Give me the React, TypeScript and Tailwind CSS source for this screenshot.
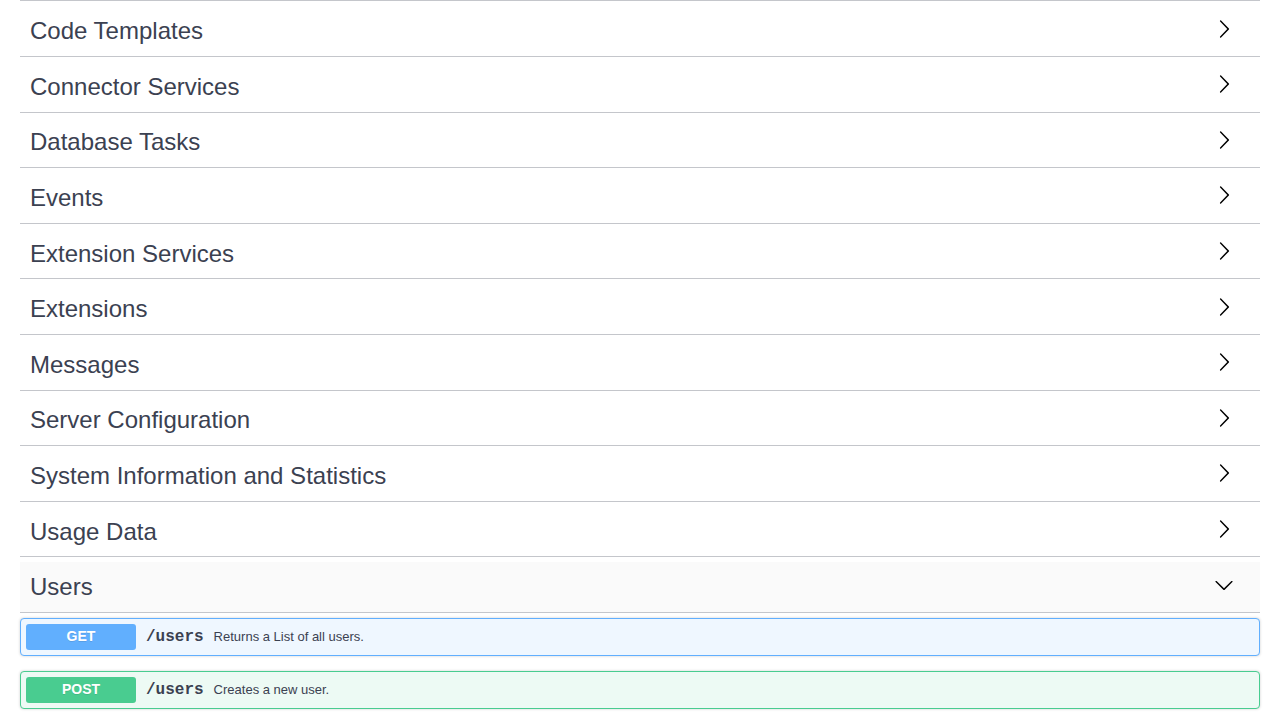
import React from "react";

const tags = [
  "Code Templates",
  "Connector Services",
  "Database Tasks",
  "Events",
  "Extension Services",
  "Extensions",
  "Messages",
  "Server Configuration",
  "System Information and Statistics",
  "Usage Data",
];

function ArrowRight() {
  return (
    <svg width="20" height="20" viewBox="0 0 20 20" className="mr-[6px] mb-[5px] shrink-0">
      <path
        fill="#000"
        d="M13.25 10L6.109 2.58a.697.697 0 0 1 0-.979.68.68 0 0 1 .969 0l7.83 7.908a.697.697 0 0 1 0 .979l-7.83 7.908a.68.68 0 0 1-.969 0 .697.697 0 0 1 0-.979L13.25 10z"
      />
    </svg>
  );
}

function ArrowDown() {
  return (
    <svg width="20" height="20" viewBox="0 0 20 20" className="mr-[6px] mb-[5px] shrink-0">
      <path
        fill="#000"
        d="M17.418 6.109c.272-.268.709-.268.979 0s.271.701 0 .969l-7.908 7.83c-.27.268-.707.268-.979 0l-7.908-7.83c-.27-.268-.27-.701 0-.969.271-.268.709-.268.979 0L10 13.25l7.418-7.141z"
      />
    </svg>
  );
}

function Tag({ name, open }: { name: string; open?: boolean }) {
  return (
    <div
      className={
        "flex items-center justify-between h-[50.6px] mb-[5px] border-b border-[#c4c6cb] pl-[10px] pr-[20px] " +
        (open ? "bg-[#fafafa]" : "")
      }
    >
      <span className="text-[24px] leading-[28px] text-[#3b4151]">{name}</span>
      {open ? <ArrowDown /> : <ArrowRight />}
    </div>
  );
}

function Op({
  method,
  desc,
  border,
  bg,
  badge,
}: {
  method: string;
  desc: string;
  border: string;
  bg: string;
  badge: string;
}) {
  return (
    <div
      className={
        "flex items-center h-[38px] mb-[15px] rounded-[4px] border px-[5px] shadow-[0_0_3px_rgba(0,0,0,0.19)] " +
        border +
        " " +
        bg
      }
    >
      <div
        className={
          "w-[110px] h-[26px] rounded-[3px] flex items-center justify-center text-white font-bold text-[14px] [text-shadow:0_1px_0_rgba(0,0,0,0.1)] " +
          badge
        }
      >
        {method}
      </div>
      <span className="px-[10px] pt-[1px] font-['Liberation_Mono','Courier_New',monospace] font-bold text-[16px] text-[#3b4151]">
        /users
      </span>
      <span className="text-[13px] text-[#3b4151]">{desc}</span>
    </div>
  );
}

export default function App() {
  return (
    <div className="w-[1280px] h-[720px] overflow-hidden bg-white font-['Liberation_Sans',Arial,sans-serif]">
      <div className="px-5">
        <div className="h-[1.4px] border-b border-[#c4c6cb] mb-[5px]" />
        {tags.map((t) => (
          <Tag key={t} name={t} />
        ))}
        <Tag name="Users" open />
        <Op
          method="GET"
          desc="Returns a List of all users."
          border="border-[#61affe]"
          bg="bg-[#eff7ff]"
          badge="bg-[#61affe]"
        />
        <Op
          method="POST"
          desc="Creates a new user."
          border="border-[#49cc90]"
          bg="bg-[#edfaf4]"
          badge="bg-[#49cc90]"
        />
      </div>
    </div>
  );
}
